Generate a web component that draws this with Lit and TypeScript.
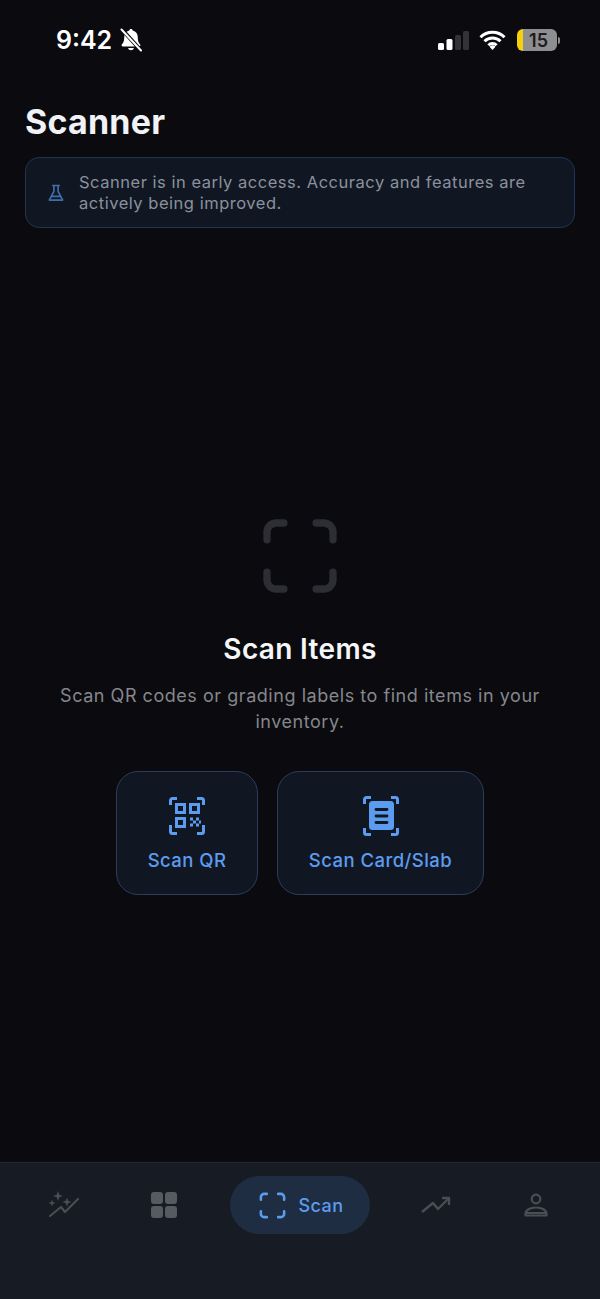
import { LitElement, html, css, svg } from "lit";
import { customElement } from "lit/decorators.js";

const cornerFrame = svg`<path d="M3 7.600V5.500A2.500 2.500 0 0 1 5.500 3H7.600M16.400 3h2.100A2.500 2.500 0 0 1 21 5.500V7.600M21 16.400v2.100a2.500 2.500 0 0 1-2.500 2.500H16.400M7.600 21H5.500A2.500 2.500 0 0 1 3 18.500V16.400" fill="none" stroke="currentColor" stroke-width="2" stroke-linecap="round" />`;

@customElement("app-root")
export class AppRoot extends LitElement {
  static styles = css`
    :host {
      display: block;
      width: 600px;
      height: 1299px;
      background: #0a0a0f;
      font-family: Inter, "Liberation Sans", sans-serif;
      color: #f5f6f8;
      overflow: hidden;
    }

    .screen {
      display: flex;
      flex-direction: column;
      height: 100%;
    }

    .status {
      display: flex;
      align-items: center;
      height: 80px;
      padding: 0 40px 0 56px;
      box-sizing: border-box;
      color: #fff;
    }

    .clock {
      font-size: 25px;
      font-weight: 600;
      line-height: 1;
    }

    .bell {
      width: 22px;
      height: 24px;
      margin-left: 8px;
    }

    .status-right {
      display: flex;
      align-items: center;
      margin-left: auto;
      gap: 11px;
    }

    .signal {
      width: 31px;
      height: 19px;
      margin-right: -1px;
    }

    .wifi {
      width: 27px;
      height: 20px;
    }

    .battery {
      display: flex;
      align-items: center;
    }

    .battery-body {
      display: flex;
      align-items: center;
      justify-content: center;
      width: 40px;
      height: 22px;
      border-radius: 6px;
      background: linear-gradient(to right, #f7cf0d 0 6px, #8e8e90 6px);
      color: #1b1b1d;
      font-size: 18px;
      font-weight: 600;
      padding-left: 3px;
      box-sizing: border-box;
    }

    .battery-cap {
      width: 2px;
      height: 7px;
      margin-left: 1px;
      border-radius: 0 2px 2px 0;
      background: #8e8e90;
    }

    .content {
      flex: 1;
      display: flex;
      flex-direction: column;
      padding: 0 25px;
      min-height: 0;
    }

    h1 {
      margin: 20px 0 14px;
      font-size: 34px;
      line-height: 43px;
      font-weight: 700;
      letter-spacing: 0.2px;
      color: #f0f2f6;
    }

    .notice {
      display: flex;
      align-items: center;
      gap: 13px;
      height: 71px;
      box-sizing: border-box;
      padding: 0 20px;
      background: #101723;
      border: 1px solid #1e3553;
      border-radius: 14px;
      font-size: 16.500px;
      line-height: 21px;
      letter-spacing: 0.52px;
      color: #8b919c;
    }

    .notice svg {
      flex: none;
      width: 20px;
      height: 20px;
      color: #3f6eab;
    }

    .empty {
      display: flex;
      flex-direction: column;
      align-items: center;
      margin-top: 287px;
    }

    .empty-icon {
      width: 88px;
      height: 88px;
      color: #2c2e33;
      margin-top: -3px;
      margin-bottom: 31px;
    }

    h2 {
      margin: 0;
      font-size: 28px;
      line-height: 36px;
      font-weight: 600;
      letter-spacing: 0.33px;
      color: #f5f6f8;
    }

    .empty p {
      margin: 16px 0 0;
      text-align: center;
      font-size: 18px;
      line-height: 26px;
      letter-spacing: 0.54px;
      color: #85878c;
    }

    .actions {
      display: flex;
      gap: 19px;
      margin-top: 36px;
    }

    .action {
      display: flex;
      flex-direction: column;
      align-items: center;
      justify-content: center;
      gap: 12px;
      height: 124px;
      padding-top: 2px;
      box-sizing: border-box;
      border: 1.500px solid #2a3d5c;
      border-radius: 22px;
      background: #101723;
      color: #5c9cf0;
      font-size: 18.500px;
      line-height: 24px;
      font-weight: 500;
      letter-spacing: 0.45px;
    }

    .action.qr {
      width: 142px;
    }

    .action.card {
      width: 207px;
    }

    .action svg {
      width: 36px;
      height: 40px;
    }

    nav {
      display: flex;
      height: 137px;
      box-sizing: border-box;
      padding: 13px 14px 0;
      background: #171b23;
      border-top: 1px solid #23272f;
    }

    .tab {
      display: flex;
      align-items: center;
      justify-content: center;
      width: 100px;
      height: 58px;
      color: #4a4d53;
    }

    .tab svg {
      width: 32px;
      height: 32px;
    }

    .tab.active {
      width: 140px;
      margin: 0 16px;
      gap: 11px;
      border-radius: 29px;
      background: #1e2d42;
      color: #5c9cf0;
      font-size: 18px;
      font-weight: 500;
      letter-spacing: 0.4px;
    }

    .tab.active svg {
      width: 31px;
      height: 31px;
    }

    .tab.grid {
      color: #565b62;
    }
  `;

  render() {
    return html`
      <div class="screen">
        <div class="status">
          <span class="clock">9:42</span>
          <svg class="bell" viewBox="0 0 22 24">
            <path d="M11 1c-1 0-1.700.7-1.700 1.600C5.800 3.500 4.200 6.200 4.200 9.500c0 3.800-.9 5.300-2.300 6.800-.7.700-.2 2.200.9 2.200h16.400c1.100 0 1.600-1.500.9-2.200-1.400-1.500-2.300-3-2.300-6.800 0-3.300-1.600-6-5.100-6.900C12.700 1.700 12 1 11 1zM8 20a3.100 3.100 0 0 0 6 0z" fill="#fff" />
            <path d="M2 1.500l18.500 20.500" stroke="#0a0a0f" stroke-width="4" />
            <path d="M1.500 1.500l19.500 21" stroke="#fff" stroke-width="2" stroke-linecap="round" />
          </svg>
          <div class="status-right">
            <svg class="signal" viewBox="0 0 31 19">
              <rect x="0" y="12" width="6" height="7" rx="1.500" fill="#fff" />
              <rect x="8.500" y="8" width="6" height="11" rx="1.500" fill="#fff" />
              <rect x="17" y="4" width="6" height="15" rx="1.500" fill="#333336" />
              <rect x="25" y="0" width="6" height="19" rx="1.500" fill="#333336" />
            </svg>
            <svg class="wifi" viewBox="0 0 27 20">
              <path d="M1.500 7.200a17 17 0 0 1 24 0M5.500 11.300a11.300 11.300 0 0 1 16 0M9.400 15.200a5.800 5.800 0 0 1 8.200 0" fill="none" stroke="#fff" stroke-width="3" />
              <path d="M13.500 20l-3-3.300a4.300 4.300 0 0 1 6 0z" fill="#fff" />
            </svg>
            <div class="battery">
              <div class="battery-body">15</div>
              <div class="battery-cap"></div>
            </div>
          </div>
        </div>

        <div class="content">
          <h1>Scanner</h1>
          <div class="notice">
            <svg viewBox="0 0 24 24" fill="none" stroke="currentColor" stroke-width="2" stroke-linejoin="round" stroke-linecap="round">
              <path d="M8 3h8M9.500 3v7L4 20.500h16L14.500 10V3M7 16h10" />
            </svg>
            <span>Scanner is in early access. Accuracy and features are actively being improved.</span>
          </div>

          <div class="empty">
            <svg class="empty-icon" viewBox="0 0 24 24">${cornerFrame}</svg>
            <h2>Scan Items</h2>
            <p>Scan QR codes or grading labels to find items in your inventory.</p>
            <div class="actions">
              <div class="action qr">
                <svg viewBox="0 0 36 40" fill="none" stroke="currentColor">
                  <path d="M1.500 9V4.500a2 2 0 0 1 2-2H8M28 2.500h4.500a2 2 0 0 1 2 2V9M34.500 29v6.500a2 2 0 0 1-2 2H28M8 37.500H3.500a2 2 0 0 1-2-2V29" stroke-width="3" />
                  <rect x="7.500" y="8.500" width="8" height="8" stroke-width="3" />
                  <rect x="21.500" y="8.500" width="8" height="8" stroke-width="3" />
                  <rect x="7.500" y="22.500" width="8" height="8" stroke-width="3" />
                  <path d="M21 21.500h3v3h-3zM27 21.500h3v3h-3zM24 24.500h3v3h-3zM30 24.500h2v3h-2zM21 27.500h3v3h-3zM27 27.500h3v3h-3z" fill="currentColor" stroke="none" />
                </svg>
                <span>Scan QR</span>
              </div>
              <div class="action card">
                <svg viewBox="0 0 36 40" fill="none" stroke="currentColor" stroke-width="3">
                  <path d="M1.500 8V3.500a2 2 0 0 1 2-2H8M28 1.500h4.500a2 2 0 0 1 2 2V8M34.500 32v4.500a2 2 0 0 1-2 2H28M8 38.500H3.500a2 2 0 0 1-2-2V32" />
                  <rect x="6" y="5" width="25" height="29" rx="3.500" fill="currentColor" stroke="none" />
                  <path d="M13 13.500h11M13 20h11M13 26.500h11" stroke="#101723" stroke-width="2.800" stroke-linecap="round" />
                </svg>
                <span>Scan Card/Slab</span>
              </div>
            </div>
          </div>
        </div>

        <nav>
          <div class="tab">
            <svg viewBox="0 0 32 32" fill="none" stroke="currentColor" stroke-width="2.200" stroke-linejoin="round" stroke-linecap="round">
              <path d="M2 27l11-9 4 5 13-13" />
              <path d="M10 2l1.300 3.700L15 7l-3.700 1.300L10 12 8.700 8.300 5 7l3.700-1.300zM4 10.500l.9 2.600 2.600.9-2.600.9L4 17.500l-.9-2.600L.5 14l2.600-.9zM19 8.500l1.200 3.300 3.300 1.200-3.300 1.200L19 17.500l-1.200-3.300-3.300-1.200 3.300-1.200z" fill="currentColor" stroke="none" />
            </svg>
          </div>
          <div class="tab grid">
            <svg viewBox="0 0 32 32" fill="currentColor">
              <rect x="3" y="3" width="12" height="12" rx="3" />
              <rect x="17" y="3" width="12" height="12" rx="3" />
              <rect x="3" y="17" width="12" height="12" rx="3" />
              <rect x="17" y="17" width="12" height="12" rx="3" />
            </svg>
          </div>
          <div class="tab active">
            <svg viewBox="0 0 24 24">${cornerFrame}</svg>
            <span>Scan</span>
          </div>
          <div class="tab">
            <svg viewBox="0 0 32 32" fill="none" stroke="currentColor" stroke-width="2.400" stroke-linejoin="round">
              <path d="M2 23l11-9 5 6 11-11" />
              <path d="M22 9h7v7" />
            </svg>
          </div>
          <div class="tab">
            <svg viewBox="0 0 32 32" fill="none" stroke="currentColor" stroke-width="2.200">
              <circle cx="16" cy="10" r="4.300" />
              <path d="M5.500 26.500v-1.500c0-4 4.500-6.500 10.500-6.500s10.500 2.500 10.500 6.500v1.500zM6 24h20" stroke-linejoin="round" />
            </svg>
          </div>
        </nav>
      </div>
    `;
  }
}

declare global {
  interface HTMLElementTagNameMap {
    "app-root": AppRoot;
  }
}
